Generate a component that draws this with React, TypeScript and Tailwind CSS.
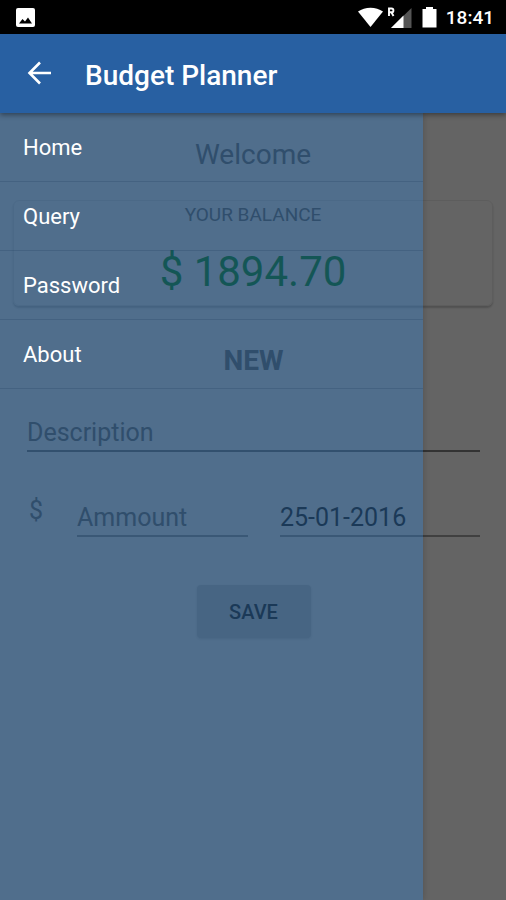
const menu = ['Home', 'Query', 'Password', 'About'];

function StatusBar() {
  return (
    <div className="flex h-[34px] items-center justify-between bg-black pl-4 pr-3 pt-0.5 text-white">
      <svg className="h-5 w-5" viewBox="0 0 20 20" aria-hidden="true">
        <rect x="0" y="0" width="19" height="19" rx="2" fill="#fff" />
        <path d="M3 15.500L6.500 11L9 13.500L12 9.500L16 15.500Z" fill="#000" />
      </svg>
      <div className="flex items-center">
        <svg className="h-[22px] w-[82px]" viewBox="0 0 82 22" aria-hidden="true">
          <path d="M0 4.500C7 -.6 18 -.6 25 4.500L12.500 20Z" fill="#fff" />
          <path d="M53.500 1V21H33Z" fill="#555" />
          <path d="M45.500 8.500V21H33Z" fill="#fff" />
          <path d="M31 9V1.500H33.500A1.900 1.900 0 0 1 33.500 5.300H31M33.500 5.500L35.500 9" fill="none" stroke="#fff" strokeWidth="1.900" />
          <path d="M64.500 2H68V0H75V2H78.500V20.500H64.500Z" fill="#fff" />
        </svg>
        <span className="ml-1.5 text-[19px] font-medium leading-6">18:41</span>
      </div>
    </div>
  );
}

function AppBar() {
  return (
    <header className="relative z-20 flex h-[79px] items-center bg-[#2860a2] pl-6 text-white shadow-[0_2px_5px_rgba(0,0,0,0.4)]">
      <button type="button" aria-label="Back" className="flex h-8 w-8 items-center">
        <svg className="h-8 w-8" viewBox="0 0 32 32" fill="none" stroke="currentColor" strokeWidth="2.600" aria-hidden="true">
          <path d="M27 15H6M16 4.500L5.500 15L16 25.500" />
        </svg>
      </button>
      <h1 className="ml-7 pl-px pt-1 text-[28px] font-medium leading-8">Budget Planner</h1>
    </header>
  );
}

function EntryForm() {
  const field =
    'h-10 w-full min-w-0 rounded-none border-b-2 bg-transparent pt-0.5 text-[25px] leading-8 text-[#212121] outline-none placeholder:text-[#757575]';
  return (
    <form className="pl-[27px] pr-[26px]" onSubmit={(e) => e.preventDefault()}>
      <h3 className="mt-[37px] text-center text-[28px] font-bold leading-9 text-[#757575]">NEW</h3>
      <input aria-label="Description" placeholder="Description" className={`${field} mt-[33px] border-[#808080]`} />
      <div className="mt-[45px] flex">
        <span className="w-[50px] pl-0.5 text-[25px] leading-7 text-[#757575]">$</span>
        <div className="grid flex-1 grid-cols-[171fr_200fr] gap-8">
          <input aria-label="Ammount" placeholder="Ammount" className={`${field} border-[#a0a0a0]`} />
          <input aria-label="Date" defaultValue="25-01-2016" className={`${field} border-[#a0a0a0]`} />
        </div>
      </div>
      <div className="mt-12 flex justify-center">
        <button type="submit" className="h-[53px] w-[114px] rounded-sm bg-[#d6d7d7] text-[20px] font-medium text-[#212121] shadow-sm">
          SAVE
        </button>
      </div>
    </form>
  );
}

export default function App() {
  return (
    <div className="flex min-h-screen flex-col bg-[#fafafa] font-['Roboto',sans-serif]">
      <StatusBar />
      <AppBar />
      <div className="relative flex-1">
        <main>
          <h2 className="pt-6 text-center text-[28px] leading-9 text-[#757575]">Welcome</h2>
          <section className="mx-[13px] mt-[27px] h-[106px] rounded-md border border-[#e9e9e9] text-center shadow-[0_2px_2px_rgba(0,0,0,0.2)]">
            <p className="text-[19px] leading-7 text-[#757575]">YOUR BALANCE</p>
            <p className="mt-[17px] text-[42px] leading-[52px] text-[#009a18]">$ 1894.70</p>
          </section>
          <EntryForm />
        </main>
        <div className="absolute inset-0 flex bg-black/60">
          <nav className="flex-1 bg-[#327dc8]/40 shadow-[1px_0_6px_rgba(0,0,0,0.15)]" aria-label="Main">
            <ul>
              {menu.map((item) => (
                <li key={item} className="border-b border-[#20405f]/25">
                  <a href="#" className="flex h-[68px] items-center pl-[23px] pt-0.5 text-[22px] leading-7 text-white">
                    {item}
                  </a>
                </li>
              ))}
            </ul>
          </nav>
          <button type="button" aria-label="Close menu" className="w-[83px]" />
        </div>
      </div>
    </div>
  );
}
